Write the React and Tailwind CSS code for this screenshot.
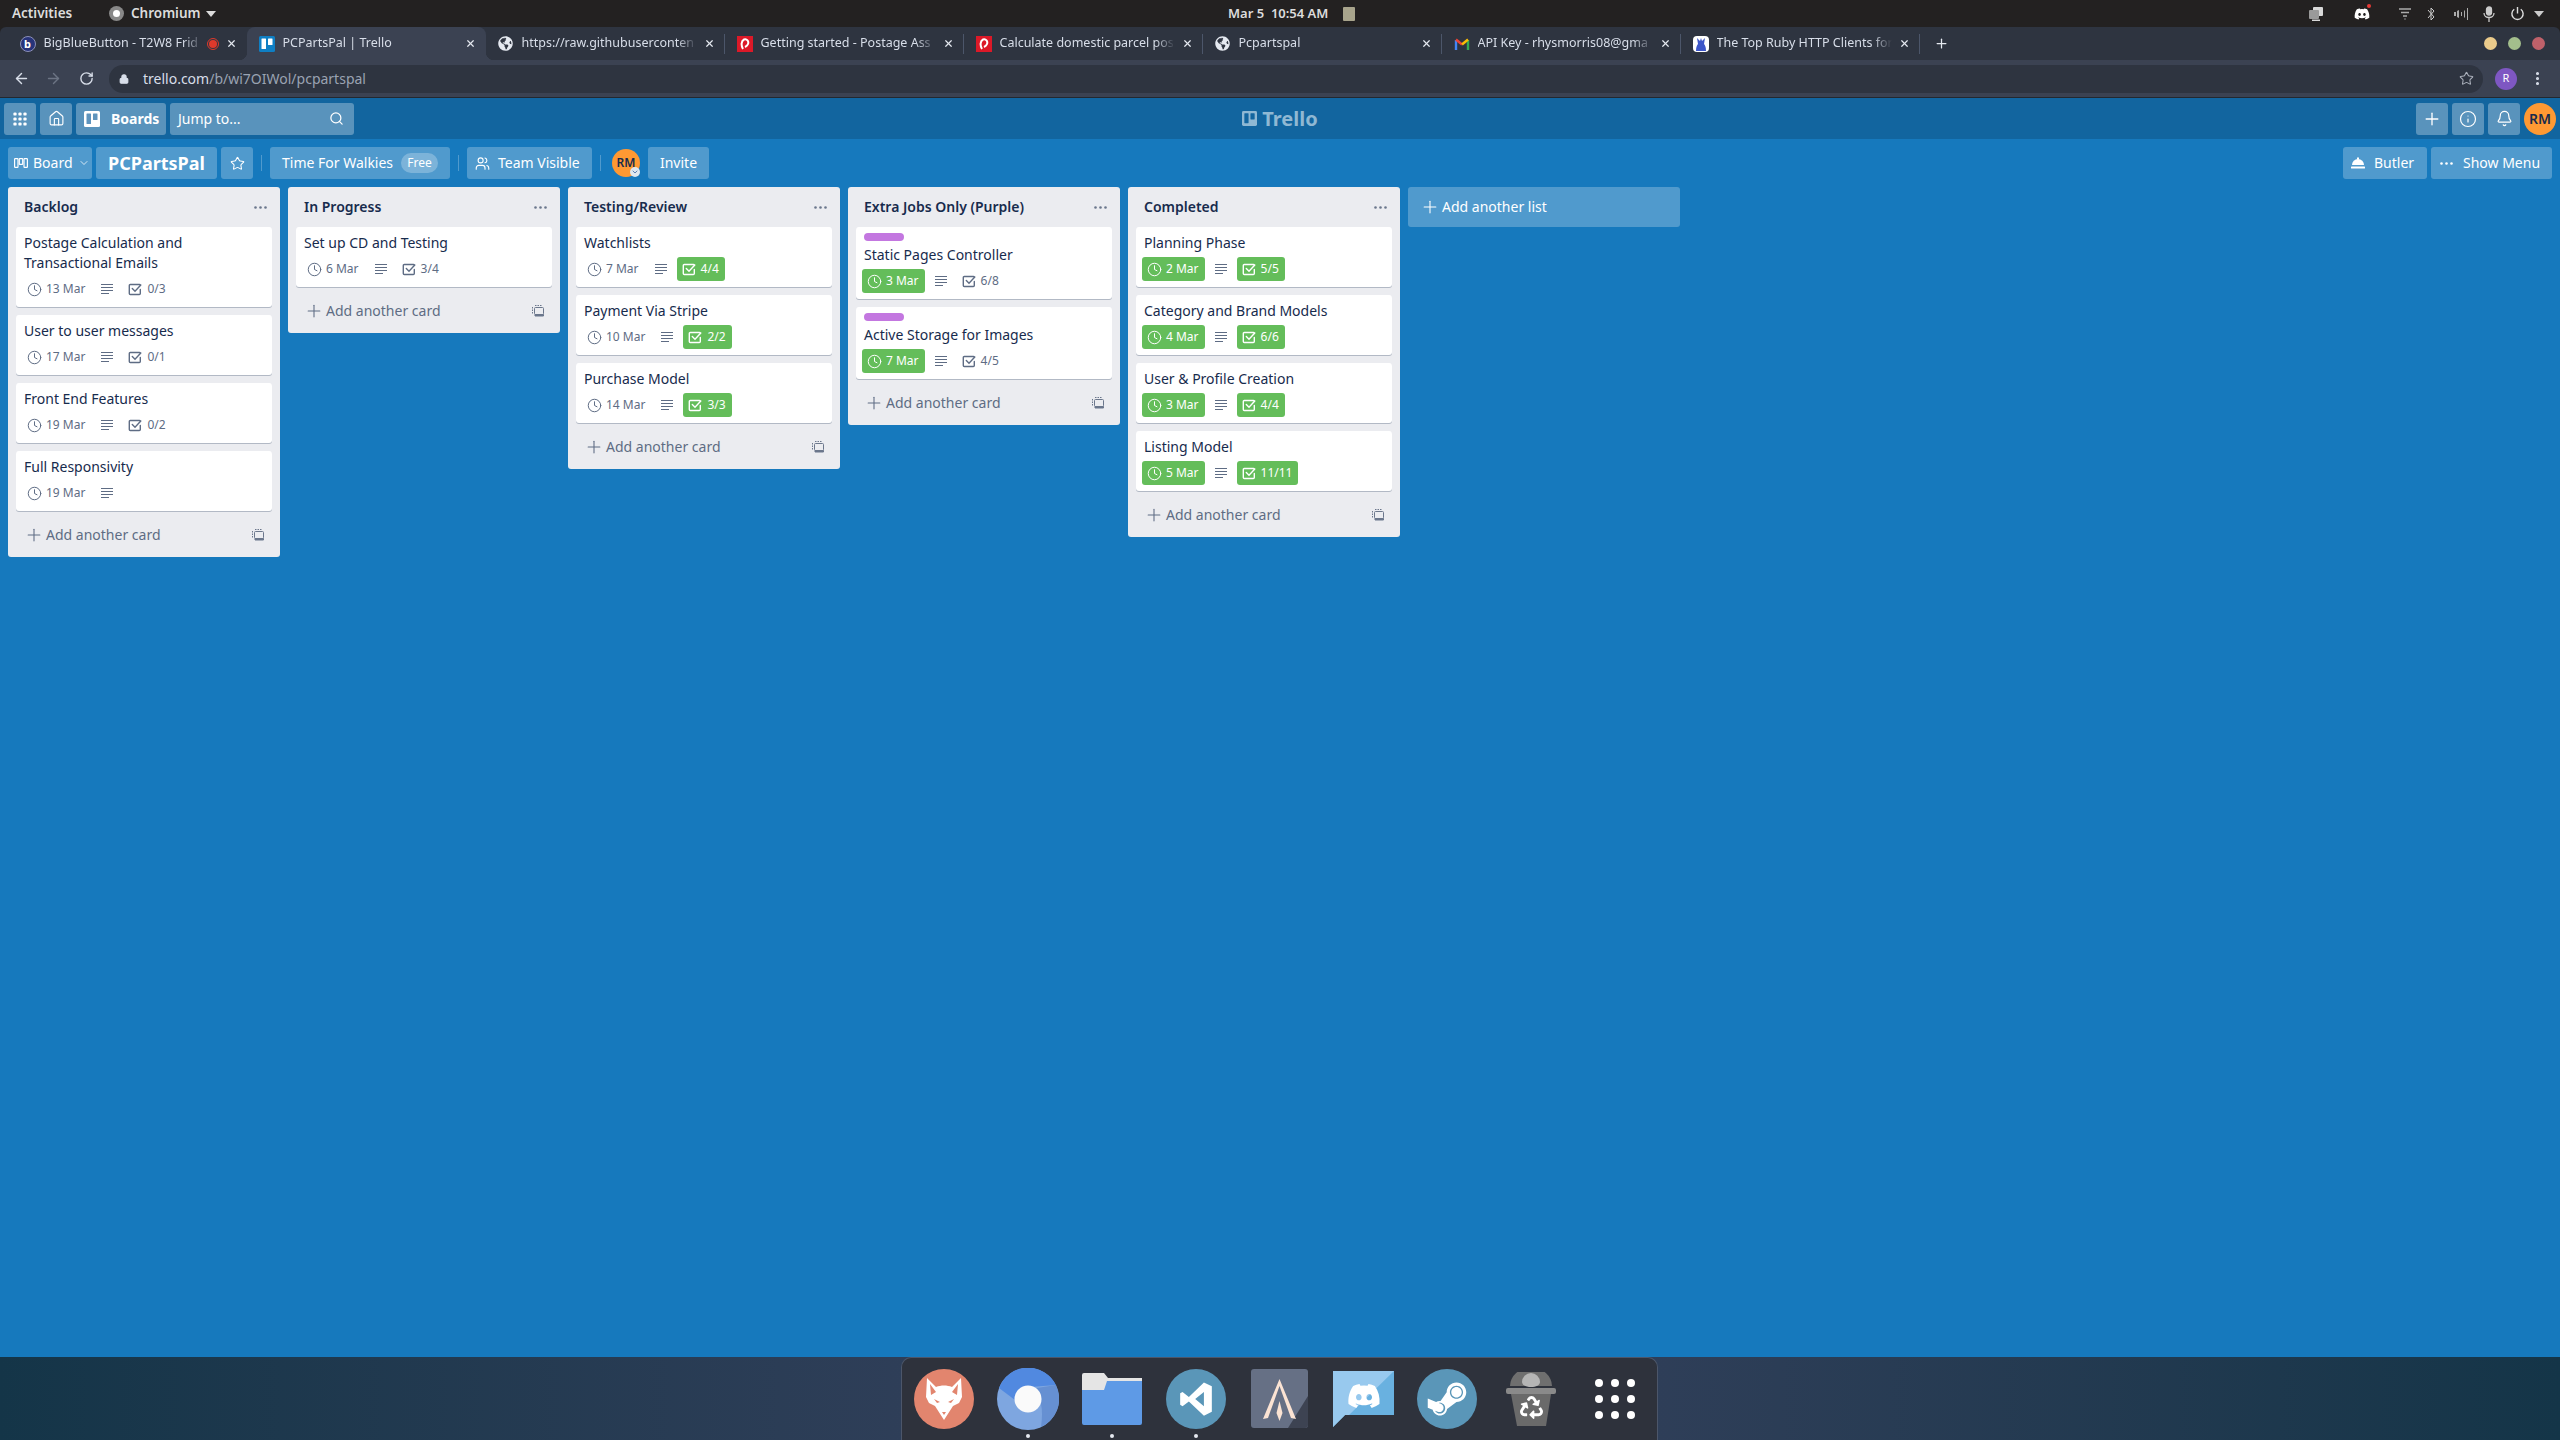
import React from "react";
import { ArrowLeft, ArrowRight, RotateCw, Lock, Star, House, Search, Plus, Info, Bell, ChevronDown, Clock, X, Users, EllipsisVertical } from "lucide-react";
import { FaDiscord, FaSteamSymbol, FaRecycle, FaGlobeAmericas } from "react-icons/fa";

const font = { fontFamily: '"Noto Sans", sans-serif' };

function TrelloMark({ className = "", cut = "#12659f" }) {
  return (
    <svg viewBox="0 0 16 16" className={className}>
      <rect width="16" height="16" rx="1.5" fill="currentColor" />
      <rect x="2.5" y="2.5" width="4.5" height="10.5" rx=".5" fill={cut} />
      <rect x="9" y="2.500" width="4.5" height="6.5" rx=".5" fill={cut} />
    </svg>
  );
}

function Desc() {
  return (
    <svg viewBox="0 0 12 12" className="h-3 w-3" fill="none" stroke="currentColor" strokeWidth="1">
      <path d="M0 1.500h12M0 4.500h12M0 7.500h12M0 10.500h8" />
    </svg>
  );
}

function CheckBox() {
  return (
    <svg viewBox="0 0 14 14" className="h-[14px] w-[14px]" fill="none" stroke="currentColor" strokeWidth="1.4" strokeLinecap="round">
      <path d="M12.300 7.500v4a1 1 0 0 1-1 1H2.300a1 1 0 0 1-1-1v-8a1 1 0 0 1 1-1h9a1 1 0 0 1 1 .6" />
      <path d="M4.300 6.500l2.700 2.800 5.800-6.300" />
    </svg>
  );
}

function TemplateIcon() {
  return (
    <svg viewBox="0 0 12 12" className="h-3 w-3" fill="none" stroke="#6b778c">
      <rect x="2.500" y="2.500" width="9" height="7" rx="1" />
      <path d="M3 9.500h8.500v1.500h-8.500z" fill="#6b778c" />
      <path d="M.5 2v7.500M3 .5h7" strokeDasharray="1.5 1" />
    </svg>
  );
}

function Dots({ color = "#6b778c" }) {
  return (
    <svg viewBox="0 0 13 3" className="h-[3px] w-[13px]" fill={color}>
      <circle cx="1.500" cy="1.500" r="1.300" />
      <circle cx="6.500" cy="1.500" r="1.300" />
      <circle cx="11.500" cy="1.500" r="1.300" />
    </svg>
  );
}

function Badge({ green, icon, text }) {
  return (
    <div className={`mr-1 flex h-6 items-center rounded-[3px] pl-1 pr-1.5 ${green ? "bg-[#64bd5a] text-white" : "text-[#5e6c84]"}`}>
      <span className="mr-1 flex w-4 justify-center">
        {icon === "clock" ? <Clock size={15} strokeWidth={1.6} /> : <CheckBox />}
      </span>
      <span className="text-xs leading-6">{text}</span>
    </div>
  );
}

function Card({ title, due, dueGreen, checks, checksGreen, desc = true, label }) {
  return (
    <div className="mb-2 rounded-[3px] bg-white px-2 pb-1.5 pt-1.5 shadow-[0_1px_0_rgba(9,30,66,0.25)]">
      {label && <div className="mb-1 h-2 w-10 rounded bg-[#c377e0]" />}
      <div className="mb-1 text-sm leading-5 text-[#172b4d]">
        {title.split("|").map((t) => (
          <div key={t}>{t}</div>
        ))}
      </div>
      <div className="-ml-0.5 flex h-6 items-center text-[#5e6c84]">
        <Badge green={dueGreen} icon="clock" text={due} />
        {desc && (
          <span className="mr-1 flex w-6 justify-start pl-1.5">
            <Desc />
          </span>
        )}
        {checks && <Badge green={checksGreen} icon="check" text={checks} />}
      </div>
    </div>
  );
}

const lists = [
  {
    name: "Backlog",
    cards: [
      { title: "Postage Calculation and|Transactional Emails", due: "13 Mar", checks: "0/3" },
      { title: "User to user messages", due: "17 Mar", checks: "0/1" },
      { title: "Front End Features", due: "19 Mar", checks: "0/2" },
      { title: "Full Responsivity", due: "19 Mar" },
    ],
  },
  { name: "In Progress", cards: [{ title: "Set up CD and Testing", due: "6 Mar", checks: "3/4" }] },
  {
    name: "Testing/Review",
    cards: [
      { title: "Watchlists", due: "7 Mar", checks: "4/4", checksGreen: true },
      { title: "Payment Via Stripe", due: "10 Mar", checks: "2/2", checksGreen: true },
      { title: "Purchase Model", due: "14 Mar", checks: "3/3", checksGreen: true },
    ],
  },
  {
    name: "Extra Jobs Only (Purple)",
    cards: [
      { title: "Static Pages Controller", due: "3 Mar", dueGreen: true, checks: "6/8", label: true },
      { title: "Active Storage for Images", due: "7 Mar", dueGreen: true, checks: "4/5", label: true },
    ],
  },
  {
    name: "Completed",
    cards: [
      { title: "Planning Phase", due: "2 Mar", dueGreen: true, checks: "5/5", checksGreen: true },
      { title: "Category and Brand Models", due: "4 Mar", dueGreen: true, checks: "6/6", checksGreen: true },
      { title: "User & Profile Creation", due: "3 Mar", dueGreen: true, checks: "4/4", checksGreen: true },
      { title: "Listing Model", due: "5 Mar", dueGreen: true, checks: "11/11", checksGreen: true },
    ],
  },
];

function List({ list }) {
  return (
    <div className="mr-2 w-[272px] shrink-0 rounded-[3px] bg-[#ebecf0]">
      <div className="flex h-10 items-center justify-between pl-4 pr-[13px] text-sm font-semibold text-[#172b4d]">
        <span>{list.name}</span>
        <Dots />
      </div>
      <div className="px-2">
        {list.cards.map((c) => (
          <Card key={c.title} {...c} />
        ))}
      </div>
      <div className="mx-2 mb-1.5 flex h-8 items-center justify-between pl-3 pr-2 text-sm text-[#5e6c84]">
        <span className="flex items-center">
          <Plus size={20} strokeWidth={1.3} className="-ml-1 mr-0.5" />
          Add another card
        </span>
        <TemplateIcon />
      </div>
    </div>
  );
}

function Favicon({ kind }) {
  if (kind === "bbb")
    return (
      <span className="flex h-4 w-4 items-center justify-center rounded-full border border-[#8c90b8] bg-[#27337a] text-[11px] font-bold leading-none text-white">b</span>
    );
  if (kind === "trello") return <TrelloMark className="h-4 w-4 text-[#0f7fc4]" cut="#ffffff" />;
  if (kind === "aus")
    return (
      <span className="flex h-4 w-4 items-center justify-center bg-[#dc1928]">
        <svg viewBox="0 0 10 12" className="h-3 w-2.5" fill="none" stroke="white" strokeWidth="2">
          <path d="M3 11C1 8 1 3 4 1.500c3-1 5 2 4 4.500-.5 1.500-2 2.500-3 3" />
        </svg>
      </span>
    );
  if (kind === "gmail")
    return (
      <svg viewBox="0 0 16 16" className="h-4 w-4" fill="none" strokeWidth="2.4">
        <path d="M2 14V4" stroke="#4285f4" />
        <path d="M14 14V4" stroke="#34a853" />
        <path d="M2 3.500l6 5" stroke="#ea4335" />
        <path d="M14 3.500l-6 5" stroke="#fbbc05" />
      </svg>
    );
  if (kind === "ruby")
    return (
      <span className="flex h-4 w-4 items-center justify-center rounded-sm bg-white">
        <svg viewBox="0 0 16 16" className="h-4 w-4">
          <path d="M3 15c0-4 1-6 2-7L4 2l3 3 1-3 1 3 3-3-1 6c1 1 2 3 2 7z" fill="#3d56c9" />
        </svg>
      </span>
    );
  return <FaGlobeAmericas size={15} className="text-[#e5e9f0]" />;
}

const tabs = [
  { kind: "bbb", title: "BigBlueButton - T2W8 Frid", rec: true },
  { kind: "trello", title: "PCPartsPal | Trello", active: true },
  { kind: "globe", title: "https://raw.githubuserconten", sep: true },
  { kind: "aus", title: "Getting started - Postage Ass", sep: true },
  { kind: "aus", title: "Calculate domestic parcel pos", sep: true },
  { kind: "globe", title: "Pcpartspal", sep: true },
  { kind: "gmail", title: "API Key - rhysmorris08@gma", sep: true },
  { kind: "ruby", title: "The Top Ruby HTTP Clients for", sep: true },
];

function Tab({ tab }) {
  return (
    <div className={`relative flex h-[33px] w-[239px] shrink-0 items-center pl-3 ${tab.active ? "rounded-t-lg bg-[#3b4252]" : ""}`}>
      {tab.active && (
        <>
          <span className="absolute bottom-0 left-[-8px] h-2 w-2 bg-[radial-gradient(circle_at_0_0,#2e3440_8px,#3b4252_8.5px)]" />
          <span className="absolute bottom-0 right-[-8px] h-2 w-2 bg-[radial-gradient(circle_at_100%_0,#2e3440_8px,#3b4252_8.5px)]" />
        </>
      )}
      <span className="mr-2 flex w-4 shrink-0 justify-center">
        <Favicon kind={tab.kind} />
      </span>
      <span className="min-w-0 flex-1 overflow-hidden whitespace-nowrap text-[12.5px] text-[#d8dee9] [mask-image:linear-gradient(to_left,transparent,black_20px)]">
        {tab.title}
      </span>
      {tab.rec && (
        <span className="ml-1 flex h-3 w-3 items-center justify-center rounded-full border border-[#e0392b]">
          <span className="h-2 w-2 rounded-full bg-[#e0392b]" />
        </span>
      )}
      <X size={11} strokeWidth={2.6} className="ml-[7px] mr-[9px] shrink-0 text-[#e5e9f0]" />
      {tab.sep ? <span className="h-5 w-px shrink-0 bg-[#4c566a]" /> : <span className="w-px shrink-0" />}
    </div>
  );
}

function HeaderBtn({ children, className = "justify-center" }) {
  return <div className={`flex h-8 items-center rounded-[3px] bg-white/30 text-white ${className}`}>{children}</div>;
}

function BarBtn({ children, className = "", text = "text-sm" }) {
  return <div className={`flex h-8 items-center rounded-[3px] bg-white/25 text-white ${text} ${className}`}>{children}</div>;
}

function Divider() {
  return <div className="mx-2 h-4 w-px bg-white/25" />;
}

function DockSlot({ children, running }) {
  return (
    <div className="relative flex h-[83px] w-[84px] items-center justify-center pb-[2px]">
      {children}
      {running && <span className="absolute bottom-[3px] left-1/2 h-1 w-1 -translate-x-1/2 rounded-full bg-[#e5e9f0]" />}
    </div>
  );
}

export default function App() {
  return (
    <div className="flex h-screen w-full flex-col overflow-hidden bg-[#1679bd]" style={font}>
      {/* GNOME top bar */}
      <div className="relative flex h-[27px] shrink-0 items-center bg-[#232121] text-[#dcdcdc]">
        <div className="w-[109px] pl-3 text-[13.5px] font-semibold">Activities</div>
        <div className="flex w-[1119px] items-center text-[13.5px] font-semibold">
          <span className="mr-[7px] flex h-[15px] w-[15px] items-center justify-center rounded-full bg-[#888]">
            <span className="h-[7px] w-[7px] rounded-full bg-white" />
          </span>
          Chromium
          <span className="ml-[5px] h-0 w-0 border-x-[5px] border-t-[6px] border-x-transparent border-t-[#dcdcdc]" />
        </div>
        <div className="flex items-center text-[13px] font-semibold">
          <span className="w-[115px] whitespace-pre">Mar 5  10:54 AM</span>
          <span className="h-[14px] w-3 rounded-[1px] bg-[#a8a48c]" />
        </div>
        <div className="ml-auto mr-[16px] flex h-[27px] items-center text-[#d8d8d8]">
          <svg viewBox="0 0 16 16" className="mr-[30px] h-4 w-4" fill="#d8d8d8">
            <rect x="5" y="1" width="10" height="9" rx="1" />
            <rect x="1" y="4" width="10" height="9" rx="1" fill="#9a9a9a" />
            <rect x="4" y="13.500" width="8" height="1.500" />
          </svg>
          <span className="relative mr-[29px]">
            <FaDiscord size={16} className="text-white" />
            <span className="absolute right-[-1px] top-[-2px] h-1 w-1 rounded-full bg-[#e53935]" />
          </span>
          <svg viewBox="0 0 12 12" className="mr-[16px] h-3 w-3" fill="none" stroke="#aaa" strokeWidth="1.400">
            <path d="M0 1h12M2 4.500h8M4 8h4M5.500 11h1" />
          </svg>
          <svg viewBox="0 0 8 16" className="mr-[19px] h-4 w-2" fill="none" stroke="#ccc">
            <path d="M1 4l6 7-3 3V2l3 3-6 7" />
          </svg>
          <svg viewBox="0 0 14 12" className="mr-[15px] h-3 w-3.5" fill="#aaa">
            <path d="M0 4h2v4H0zM3 3l2-1v8l-2-1zM7 4h1v4H7zM10 2.500h1v7h-1zM13 0h1v12h-1z" />
          </svg>
          <svg viewBox="0 0 12 16" className="mr-[15px] h-4 w-3" fill="none" stroke="#ccc" strokeWidth="1.300">
            <rect x="3.500" y="1" width="5" height="8" rx="2.500" fill="#ccc" />
            <path d="M1 7c0 6 10 6 10 0M6 12v4" />
          </svg>
          <svg viewBox="0 0 16 16" className="mr-[9px] h-[15px] w-[15px]" fill="none" stroke="#ddd" strokeWidth="1.500">
            <path d="M8 1v7M4.500 3.500a6 6 0 1 0 7 0" />
          </svg>
          <span className="h-0 w-0 border-x-[5.5px] border-t-[6px] border-x-transparent border-t-[#ccc]" />
        </div>
      </div>

      {/* Browser tab strip */}
      <div className="flex h-[33px] shrink-0 items-center bg-[#232121]">
        <div className="flex h-[33px] w-full items-center rounded-t-md bg-[#2e3440] pl-[7.5px]">
          {tabs.map((t) => (
            <Tab key={t.title} tab={t} />
          ))}
          <Plus size={15} strokeWidth={2} className="ml-[14px] text-[#e5e9f0]" />
          <div className="ml-auto mr-[15px] flex items-center gap-[11px]">
            <span className="h-[13px] w-[13px] rounded-full bg-[#ebcb8b]" />
            <span className="h-[13px] w-[13px] rounded-full bg-[#a3be8c]" />
            <span className="h-[13px] w-[13px] rounded-full bg-[#bf616a]" />
          </div>
        </div>
      </div>

      {/* Browser toolbar */}
      <div className="flex h-[38px] shrink-0 items-center border-b border-[#232830] bg-[#3b4252] text-[#d8dee9]">
        <div className="flex w-[109px] items-center pl-[13px]">
          <ArrowLeft size={17} strokeWidth={2} />
          <ArrowRight size={17} strokeWidth={2} className="ml-[15px] text-[#6c7484]" />
          <RotateCw size={15} strokeWidth={2.2} className="ml-[17px]" />
        </div>
        <div className="flex h-7 w-[2374px] items-center rounded-full bg-[#2e3440] pl-[10px] pr-[9px] text-sm">
          <Lock size={10} strokeWidth={3} className="mr-[14px]" fill="#d8dee9" />
          <span>trello.com</span>
          <span className="text-[#9aa3b2]">/b/wi7OIWol/pcpartspal</span>
          <Star size={15} strokeWidth={1.7} className="ml-auto text-[#aab0bb]" />
        </div>
        <span className="ml-[12px] flex h-[22px] w-[22px] items-center justify-center rounded-full bg-[#7e57c2] text-[11px] text-white">R</span>
        <EllipsisVertical size={17} strokeWidth={2.4} className="ml-[12px]" />
      </div>

      {/* Trello header */}
      <div className="relative flex h-[41px] shrink-0 items-center gap-1 bg-[#12659f] px-1">
        <HeaderBtn className="w-8 justify-center">
          <svg viewBox="0 0 14 14" className="h-3.5 w-3.5" fill="white">
            {[2, 7, 12].flatMap((y) => [2, 7, 12].map((x) => <rect key={`${x}${y}`} x={x - 1.6} y={y - 1.6} width="3.2" height="3.2" rx="1.2" />))}
          </svg>
        </HeaderBtn>
        <HeaderBtn className="w-8 justify-center">
          <House size={17} strokeWidth={1.6} />
        </HeaderBtn>
        <HeaderBtn className="w-[90px] justify-start pl-2 text-sm font-bold">
          <TrelloMark className="mr-[11px] h-4 w-4 text-white" cut="#5e94bd" />
          Boards
        </HeaderBtn>
        <HeaderBtn className="w-[184px] justify-between pl-2 pr-[10px] text-sm">
          <span>Jump to...</span>
          <Search size={15} strokeWidth={2} />
        </HeaderBtn>
        <div className="flex flex-1 items-center justify-center">
          <div className="ml-[-210px] flex items-center text-xl font-bold leading-none">
            <TrelloMark className="mr-[5px] h-[15px] w-[15px] text-[#8fb8d3]" cut="#12659f" />
            <span className="text-[#8fb8d3]">Trello</span>
          </div>
        </div>
        <HeaderBtn className="w-8 justify-center">
          <Plus size={20} strokeWidth={1.6} />
        </HeaderBtn>
        <HeaderBtn className="w-8 justify-center">
          <Info size={18} strokeWidth={1.6} />
        </HeaderBtn>
        <HeaderBtn className="w-8 justify-center">
          <Bell size={17} strokeWidth={1.7} />
        </HeaderBtn>
        <div className="flex h-8 w-8 items-center justify-center rounded-full bg-[#ff9933] text-sm font-semibold text-[#172b4d]">RM</div>
      </div>

      {/* Board */}
      <div className="flex min-h-0 flex-1 flex-col">
        <div className="flex items-center px-2 pt-2">
          <BarBtn className="mr-1 w-[84px] pl-1.5">
            <svg viewBox="0 0 14 10" className="mr-[5px] h-[10px] w-[14px]" fill="none" stroke="white" strokeWidth="1.200">
              <rect x=".6" y=".6" width="3.400" height="8.800" rx=".6" />
              <rect x="5.300" y=".6" width="3.400" height="5.800" rx=".6" />
              <rect x="10" y=".6" width="3.400" height="8.800" rx=".6" />
            </svg>
            Board
            <ChevronDown size={12} strokeWidth={1.5} className="ml-[5px]" />
          </BarBtn>
          <BarBtn className="mr-1 w-[121px] justify-center font-bold" text="text-lg">PCPartsPal</BarBtn>
          <BarBtn className="w-8 justify-center">
            <Star size={15} strokeWidth={1.7} />
          </BarBtn>
          <Divider />
          <BarBtn className="w-[180px] pl-3">
            Time For Walkies
            <span className="ml-2 flex h-5 w-[37px] items-center justify-center rounded-full bg-white/25 text-xs">Free</span>
          </BarBtn>
          <Divider />
          <BarBtn className="w-[125px] pl-2">
            <Users size={15} strokeWidth={1.8} className="mr-2" />
            Team Visible
          </BarBtn>
          <Divider />
          <div className="relative ml-[3px] mr-2 flex h-7 w-7 items-center justify-center rounded-full bg-[#ff9933] text-xs font-semibold text-[#172b4d]">
            RM
            <span className="absolute bottom-0 right-0 flex h-[10px] w-[10px] items-center justify-center rounded-full bg-[#dfe7ee]">
              <ChevronDown size={8} strokeWidth={3} className="text-[#5b7fb5]" />
            </span>
          </div>
          <BarBtn className="w-[61px] justify-center">Invite</BarBtn>
          <div className="ml-auto flex gap-1">
            <BarBtn className="w-[84px] pl-2">
              <svg viewBox="0 0 14 12" className="mr-[9px] h-3 w-3.5" fill="white">
                <path d="M1 8a6 6 0 0 1 12 0z" />
                <rect y="9.500" width="14" height="2" rx=".5" />
                <rect x="6" y=".5" width="2" height="2" />
              </svg>
              Butler
            </BarBtn>
            <BarBtn className="w-[121px] pl-[9px]">
              <span className="mr-[10px] flex">
                <Dots color="white" />
              </span>
              Show Menu
            </BarBtn>
          </div>
        </div>
        <div className="flex items-start px-2 pt-2">
          {lists.map((l) => (
            <List key={l.name} list={l} />
          ))}
          <div className="flex h-10 w-[272px] shrink-0 items-center rounded-[3px] bg-white/25 pl-4 text-sm text-white">
            <Plus size={20} strokeWidth={1.3} className="-ml-1 mr-0.5" />
            Add another list
          </div>
        </div>
      </div>

      {/* Dock */}
      <div className="flex h-[83px] shrink-0 justify-center bg-gradient-to-r from-[#143548] via-[#38425f] to-[#143548]">
        <div className="ml-[-1px] flex w-[757px] rounded-t-[10px] border border-b-0 border-[#4c566a] bg-[#2e323c]">
          <DockSlot>
            <span className="flex h-[60px] w-[60px] items-center justify-center rounded-full bg-[#e2856e]">
              <svg viewBox="0 0 40 44" className="h-[44px] w-10" fill="white">
                <path d="M3 1l9 9c5-2 11-2 16 0l9-9 1 19-3 6-6 3-9 14-9-14-6-3-3-6z" />
                <path d="M6 7l6 8-5 3zM34 7l-6 8 5 3z" fill="#e2856e" />
                <path d="M10 22l6 3-3 1zM30 22l-6 3 3 1zM20 38l-2-3h4z" fill="#e2856e" />
              </svg>
            </span>
          </DockSlot>
          <DockSlot running>
            <svg viewBox="0 0 62 62" className="h-[62px] w-[62px]">
              <circle cx="31" cy="31" r="31" fill="#7ea6e0" />
              <path d="M2 20A31 31 0 0 1 59 17L33 19Q22 20 18 32Z" fill="#5189e0" />
              <path d="M59 17A31 31 0 0 1 44 59Q46 45 44 36L40 20Z" fill="#6690d2" />
              <circle cx="31" cy="31" r="13.500" fill="#fafafa" />
            </svg>
          </DockSlot>
          <DockSlot running>
            <svg viewBox="0 0 60 52" className="h-[52px] w-[60px]">
              <path d="M0 2a2 2 0 0 1 2-2h20l4 5h32a2 2 0 0 1 2 2v4H0z" fill="#e5e5e5" />
              <path d="M0 17h20l3-11h35a2 2 0 0 1 2 2v42a2 2 0 0 1-2 2H2a2 2 0 0 1-2-2z" fill="#5e9ae6" />
              <path d="M0 5h60v3H25l-3 9H0z" fill="#e5e5e5" />
            </svg>
          </DockSlot>
          <DockSlot running>
            <span className="flex h-[60px] w-[60px] items-center justify-center rounded-full bg-[#5a96b8]">
              <svg viewBox="0 0 24 24" className="h-[38px] w-[38px]" fill="white" fillRule="evenodd">
                <path d="M17 1.500l5 2.500v16l-5 2.500-9.500-9L3.500 16.500 2 15.700V8.300l1.500-.8 4 3.300zM17 7.500L11.500 12l5.500 4.500z" />
              </svg>
            </span>
          </DockSlot>
          <DockSlot>
            <svg viewBox="0 0 57 59" className="h-[59px] w-[57px]">
              <rect width="57" height="59" rx="3" fill="#667085" />
              <path d="M37 59l20-32v29a3 3 0 0 1-3 3z" fill="#3d4352" />
              <path d="M28.500 10L45 50l-5-1-11.500-32L17 49l-5 1z" fill="#fbe3d3" />
              <path d="M28.500 32l3 12-3 8-3-8z" fill="#fbe3d3" />
            </svg>
          </DockSlot>
          <DockSlot>
            <span className="relative h-[56px] w-[61px]">
              <svg viewBox="0 0 61 56" className="h-[56px] w-[61px]">
                <path d="M0 0h61v44H12L0 56z" fill="#69b1e0" />
                <path d="M0 0h61L16 44H12L0 56z" fill="#98c9ee" />
              </svg>
              <FaDiscord size={34} className="absolute left-[14px] top-2 text-white" />
            </span>
          </DockSlot>
          <DockSlot>
            <span className="flex h-[60px] w-[60px] items-center justify-center rounded-full bg-[#5a96b8]">
              <FaSteamSymbol size={44} className="text-white" />
            </span>
          </DockSlot>
          <DockSlot>
            <span className="relative h-[54px] w-[50px]">
              <svg viewBox="0 0 50 54" className="h-[54px] w-[50px]">
                <path d="M4 14a16 14 0 0 1 42 0z" fill="#6f6f6f" />
                <path d="M16 10a9 9 0 0 1 18 0c0 3-4 5-9 5s-9-2-9-5z" fill="#b5b5b5" />
                <rect x="0" y="16" width="50" height="6" rx="2" fill="#8a8a8a" />
                <path d="M5 22h40l-5 32H11z" fill="#6a6a6a" />
              </svg>
              <FaRecycle size={23} className="absolute left-[13.500px] top-[24px] text-white" />
            </span>
          </DockSlot>
          <DockSlot>
            <span className="grid grid-cols-3 gap-2">
              {[1, 2, 3, 4, 5, 6, 7, 8, 9].map((i) => (
                <span key={i} className="h-2 w-2 rounded-full bg-white" />
              ))}
            </span>
          </DockSlot>
        </div>
      </div>
    </div>
  );
}
